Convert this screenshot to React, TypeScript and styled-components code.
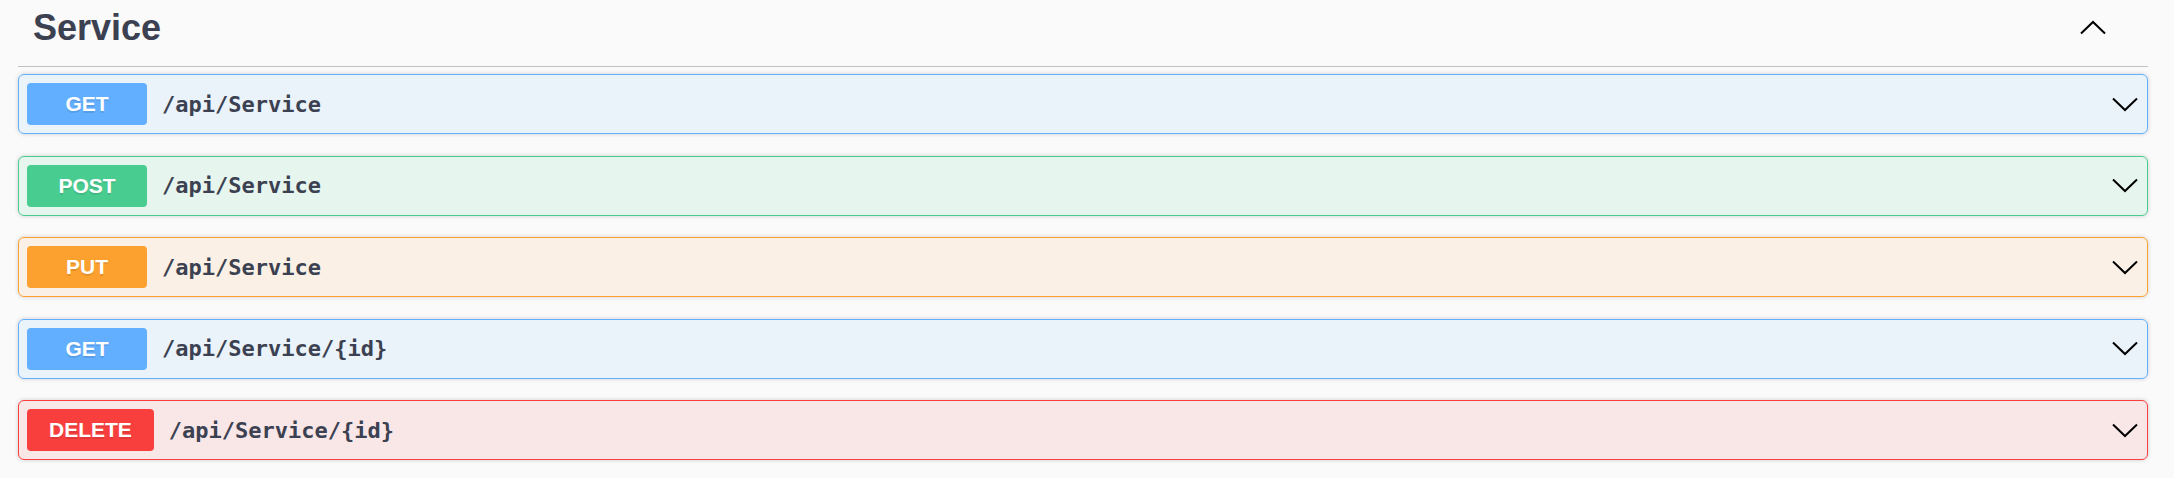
import React from 'react';
import styled, { createGlobalStyle } from 'styled-components';

const GlobalStyle = createGlobalStyle`
  body {
    margin: 0;
    background: #fafafa;
    font-family: "Liberation Sans", Arial, sans-serif;
  }
`;

type Method = 'GET' | 'POST' | 'PUT' | 'DELETE';

const palette: Record<Method, { main: string; bg: string }> = {
  GET: { main: '#61affe', bg: 'rgba(97, 175, 254, 0.1)' },
  POST: { main: '#49cc90', bg: 'rgba(73, 204, 144, 0.1)' },
  PUT: { main: '#fca130', bg: 'rgba(252, 161, 48, 0.1)' },
  DELETE: { main: '#f93e3e', bg: 'rgba(249, 62, 62, 0.1)' },
};

const Section = styled.section`
  padding: 0 26px 0 18px;
`;

const TagHeader = styled.h3`
  display: flex;
  align-items: center;
  justify-content: space-between;
  margin: 0 0 7px;
  padding: 7px 30px 18px 15px;
  border-bottom: 1px solid rgba(59, 65, 81, 0.3);
  font-family: "Liberation Sans", Arial, sans-serif;
  font-size: 36px;
  line-height: 41px;
  font-weight: 700;
  color: #3b4151;
`;

const ToggleButton = styled.button`
  display: flex;
  align-items: center;
  padding: 0;
  margin-right: 11px;
  border: none;
  background: none;
  cursor: pointer;
`;

const OpBlock = styled.div<{ $method: Method }>`
  display: flex;
  align-items: center;
  margin-bottom: 21.5px;
  padding: 8px;
  border: 1px solid ${(p) => palette[p.$method].main};
  border-radius: 6px;
  background: ${(p) => palette[p.$method].bg};
  box-shadow: 0 0 4px rgba(0, 0, 0, 0.19);
`;

const MethodBadge = styled.span<{ $method: Method }>`
  min-width: 120px;
  box-sizing: border-box;
  padding: 9px 22px;
  border-radius: 4px;
  background: ${(p) => palette[p.$method].main};
  color: #fff;
  font-family: "Liberation Sans", Arial, sans-serif;
  font-size: 21px;
  line-height: 24px;
  font-weight: 700;
  text-align: center;
  text-shadow: 0 1.5px 0 rgba(0, 0, 0, 0.1);
`;

const PathText = styled.span`
  padding: 0 15px;
  font-family: "DejaVu Sans Mono", "Liberation Mono", monospace;
  font-size: 22px;
  font-weight: 700;
  color: #3b4151;
`;

const Arrow = styled.svg`
  margin-left: auto;
  margin-right: 1px;
  flex-shrink: 0;
`;

const Chevron = ({ up }: { up?: boolean }) => (
  <Arrow width="26" height="15" viewBox="0 0 26 15">
    <polyline
      points={up ? '1,13.5 13,2 25,13.5' : '1,1.5 13,13 25,1.5'}
      fill="none"
      stroke="#000"
      strokeWidth="2"
    />
  </Arrow>
);

const operations: { method: Method; path: string }[] = [
  { method: 'GET', path: '/api/Service' },
  { method: 'POST', path: '/api/Service' },
  { method: 'PUT', path: '/api/Service' },
  { method: 'GET', path: '/api/Service/{id}' },
  { method: 'DELETE', path: '/api/Service/{id}' },
];

const App = () => {
  return (
    <>
      <GlobalStyle />
      <Section>
        <TagHeader>
          <span>Service</span>
          <ToggleButton aria-label="Collapse operation">
            <Chevron up />
          </ToggleButton>
        </TagHeader>
        {operations.map((op, i) => (
          <OpBlock key={i} $method={op.method}>
            <MethodBadge $method={op.method}>{op.method}</MethodBadge>
            <PathText>{op.path}</PathText>
            <Chevron />
          </OpBlock>
        ))}
      </Section>
    </>
  );
};

export default App;
